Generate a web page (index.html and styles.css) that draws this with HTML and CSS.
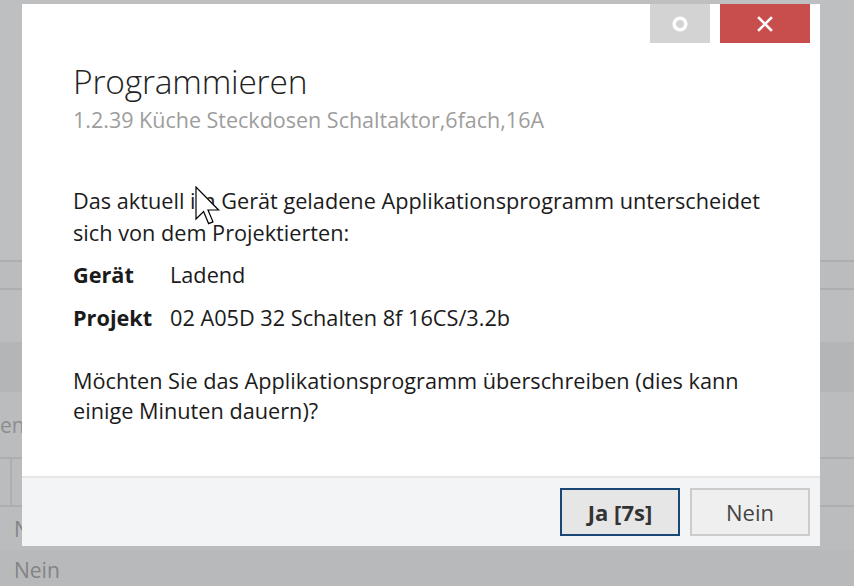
FILE: index.html
```html
<!DOCTYPE html>
<html lang="de">
<head>
<meta charset="utf-8">
<title>Programmieren</title>
<link rel="stylesheet" href="styles.css">
</head>
<body>
<div class="backdrop">
  <div class="bg-top"></div>
  <div class="bg-row bg-row-a"></div>
  <div class="bg-row bg-row-b"></div>
  <div class="bg-band"></div>
  <div class="bg-text-row"><span class="bg-text">en</span></div>
  <div class="bg-cells"><div class="bg-cell"></div><div class="bg-cell"></div></div>
  <div class="bg-row-n"><span class="bg-label">Nein</span></div>
  <div class="bg-bottom"><span class="bg-label">Nein</span></div>
</div>

<div class="dialog">
  <div class="titlebar">
    <button class="tb-btn tb-restore" aria-label="Wiederherstellen">
      <svg width="16" height="16" viewBox="0 0 16 16"><circle cx="8" cy="8" r="5.8" fill="none" stroke="#fff" stroke-width="3.6"/></svg>
    </button>
    <button class="tb-btn tb-close" aria-label="Schließen">
      <svg width="16" height="16" viewBox="0 0 16 16"><path d="M2 2 L14 14 M14 2 L2 14" stroke="#fff" stroke-width="2.6" stroke-linecap="square"/></svg>
    </button>
  </div>
  <div class="content">
    <h1 class="title">Programmieren</h1>
    <div class="subtitle">1.2.39 Küche Steckdosen Schaltaktor,6fach,16A</div>
    <p class="para first">Das aktuell im Gerät geladene Applikationsprogramm unterscheidet sich von dem Projektierten:</p>
    <div class="info">
      <div class="info-label">Gerät</div><div class="info-value">Ladend</div>
      <div class="info-label">Projekt</div><div class="info-value">02 A05D 32 Schalten 8f 16CS/3.2b</div>
    </div>
    <p class="para second">Möchten Sie das Applikationsprogramm überschreiben (dies kann einige Minuten dauern)?</p>
  </div>
  <div class="footer">
    <button class="btn btn-primary">Ja [7s]</button>
    <button class="btn btn-secondary">Nein</button>
  </div>
</div>

<svg class="cursor" width="26" height="40" viewBox="0 0 13 20">
  <path d="M0.5 0.5 V16.5 L4.3 12.8 L6.8 18.8 L9 17.9 L6.5 12 H11.8 Z" fill="#fff" stroke="#000" stroke-width="0.6" stroke-linejoin="miter"/>
</svg>
</body>
</html>
```
FILE: styles.css
```css
html, body {
  margin: 0;
  padding: 0;
}
body {
  width: 854px;
  height: 586px;
  overflow: hidden;
  position: relative;
  font-family: "Open Sans", "Noto Sans", "Liberation Sans", sans-serif;
  background: #bdbebf;
}
.backdrop {
  display: flex;
  flex-direction: column;
  width: 854px;
  height: 586px;
}
.bg-top {
  height: 262px;
  background: #bebfc0;
  border-bottom: 2px solid #adaeaf;
  box-sizing: border-box;
}
.bg-row-a {
  height: 28px;
  background: #bbbcbd;
  border-bottom: 2px solid #adaeaf;
  box-sizing: border-box;
}
.bg-row-b {
  height: 53px;
  background: #bcbdbe;
}
.bg-band {
  height: 50px;
  background: #b4b5b6;
}
.bg-text-row {
  height: 67px;
  background: #bbbcbd;
  border-bottom: 2px solid #adaeaf;
  box-sizing: border-box;
  display: flex;
  align-items: center;
  overflow: hidden;
}
.bg-text {
  font-size: 21px;
  color: #8d8e8f;
  margin-left: 0;
}
.bg-cells {
  height: 48px;
  background: #bbbcbd;
  border-bottom: 2px solid #adaeaf;
  box-sizing: border-box;
  display: flex;
}
.bg-cell {
  width: 10px;
  border-right: 2px solid #adaeaf;
}
.bg-row-n {
  height: 43px;
  background: #bbbcbd;
  display: flex;
  align-items: center;
  padding-left: 14px;
}
.bg-bottom {
  height: 36px;
  background: #b8b9ba;
  display: flex;
  align-items: center;
  padding-left: 14px;
  padding-top: 4px;
  box-sizing: border-box;
}
.bg-label {
  font-size: 21px;
  color: #838485;
}

.dialog {
  position: absolute;
  left: 22px;
  top: 4px;
  width: 798px;
  height: 542px;
  background: #fff;
  display: flex;
  flex-direction: column;
}
.titlebar {
  display: flex;
  justify-content: flex-end;
  gap: 10px;
  padding-right: 10px;
  height: 39px;
}
.tb-btn {
  border: 0;
  padding: 0;
  width: 60px;
  height: 39px;
  display: flex;
  align-items: center;
  justify-content: center;
}
.tb-restore { background: #d3d3d3; }
.tb-close { width: 90px; background: #c84d4d; }

.content {
  flex: 1;
  padding: 18px 0 0 51px;
  color: #1b1b1b;
}
.title {
  margin: 0;
  font-size: 33.5px;
  font-weight: 300;
  line-height: 40px;
  color: #222;
  letter-spacing: -0.2px;
}
.subtitle {
  font-size: 21.5px;
  line-height: 28px;
  color: #9d9d9d;
  margin-top: 5px;
}
.para {
  margin: 0;
  font-size: 21.7px;
  width: 720px;
}
.para.first {
  margin-top: 51px;
  line-height: 32px;
}
.info {
  display: grid;
  grid-template-columns: 97px auto;
  row-gap: 11px;
  margin-top: 10px;
  font-size: 21.7px;
  line-height: 32px;
}
.info-label { font-weight: 700; }
.para.second {
  margin-top: 32px;
  line-height: 30px;
}
.footer {
  height: 70px;
  box-sizing: border-box;
  border-top: 2px solid #e6e6e6;
  background: #f3f4f6;
  display: flex;
  justify-content: flex-end;
  align-items: flex-start;
  gap: 10px;
  padding: 10px 10px 0 0;
}
.btn {
  width: 120px;
  height: 48px;
  font-family: inherit;
  font-size: 22px;
  color: #222;
  box-sizing: border-box;
  padding: 0;
}
.btn-primary {
  background: #e6e6e6;
  border: 2px solid #1a4676;
  font-weight: 700;
  color: #333;
}
.btn-secondary {
  background: #efefef;
  border: 2px solid #cccccc;
  color: #444;
}
.cursor {
  position: absolute;
  left: 195px;
  top: 186px;
}
```
